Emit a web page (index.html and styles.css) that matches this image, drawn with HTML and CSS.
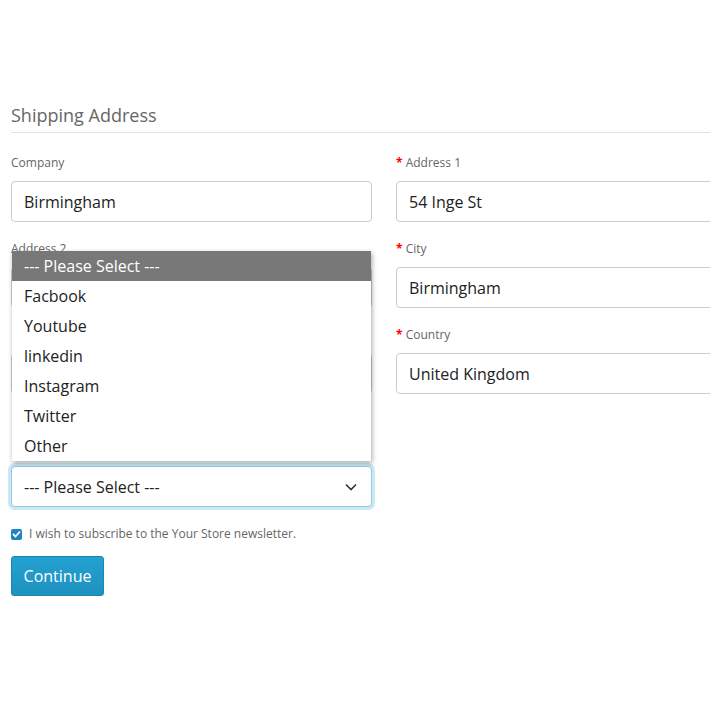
FILE: index.html
```html
<!DOCTYPE html>
<html>
<head>
<meta charset="utf-8">
<link rel="stylesheet" href="styles.css">
</head>
<body>
<div class="page">
  <h2 class="title">Shipping Address</h2>
  <div class="cols">
    <div class="col">
      <div class="field">
        <label class="lbl">Company</label>
        <div class="input">Birmingham</div>
      </div>
      <div class="field">
        <label class="lbl">Address 2</label>
        <div class="input"></div>
      </div>
      <div class="field">
        <span class="lbl"></span>
        <div class="input"></div>
      </div>
      <div class="field field-select">
        <span class="lbl"></span>
        <div class="select">
          <span>--- Please Select ---</span>
          <svg class="chev" width="12" height="8" viewBox="0 0 12 8"><polyline points="1,1.5 6,6.5 11,1.5" fill="none" stroke="#333" stroke-width="1.6"/></svg>
        </div>
      </div>
      <div class="check-row">
        <span class="checkbox"><svg width="9" height="8" viewBox="0 0 9 8"><polyline points="1,4 3.5,6.5 8,1.5" fill="none" stroke="#fff" stroke-width="1.8"/></svg></span>
        <span class="check-text">I wish to subscribe to the Your Store newsletter.</span>
      </div>
      <button class="btn">Continue</button>
      <ul class="dropdown">
        <li class="opt sel">--- Please Select ---</li>
        <li class="opt">Facbook</li>
        <li class="opt">Youtube</li>
        <li class="opt">linkedin</li>
        <li class="opt">Instagram</li>
        <li class="opt">Twitter</li>
        <li class="opt">Other</li>
      </ul>
    </div>
    <div class="col">
      <div class="field">
        <label class="lbl"><span class="req">*</span> Address 1</label>
        <div class="input">54 Inge St</div>
      </div>
      <div class="field">
        <label class="lbl"><span class="req">*</span> City</label>
        <div class="input">Birmingham</div>
      </div>
      <div class="field">
        <label class="lbl"><span class="req">*</span> Country</label>
        <div class="input">United Kingdom</div>
      </div>
    </div>
  </div>
</div>
</body>
</html>
```
FILE: styles.css
```css
html, body {
  margin: 0;
  padding: 0;
  overflow: hidden;
  background: #fff;
}
body {
  font-family: "Open Sans", "Noto Sans", sans-serif;
  color: #333;
}
.page {
  padding: 102px 0 0 11px;
  width: 760px;
}
.title {
  margin: 0;
  font-size: 18px;
  font-weight: 400;
  line-height: 26px;
  color: #666;
  padding-bottom: 4px;
  border-bottom: 1px solid #e2e2e2;
}
.cols {
  display: flex;
  gap: 24px;
  padding-top: 21px;
}
.col {
  width: 361px;
  display: flex;
  flex-direction: column;
  position: relative;
}
.field {
  display: flex;
  flex-direction: column;
  margin-bottom: 18px;
}
.lbl {
  display: block;
  height: 18px;
  font-size: 12px;
  line-height: 18px;
  color: #666;
  margin-bottom: 9px;
}
.req {
  color: #f00;
  font-weight: 700;
}
.input, .select {
  box-sizing: border-box;
  height: 41px;
  border: 1px solid #ccc;
  border-radius: 4px;
  padding: 1px 12px 0;
  font-size: 16px;
  line-height: 38px;
  color: #222;
  background: #fff;
}
.field-select {
  margin-top: 27px;
  margin-bottom: 0;
}
.select {
  display: flex;
  align-items: center;
  justify-content: space-between;
  border-color: #8ecae3;
  box-shadow: 0 0 0 3px rgba(160, 212, 235, 0.55);
  padding-right: 14px;
}
.chev {
  display: block;
}
.check-row {
  display: flex;
  align-items: center;
  gap: 7px;
  margin-top: 19px;
  height: 16px;
}
.checkbox {
  width: 11px;
  height: 11px;
  border-radius: 2px;
  background: #1f84c6;
  display: flex;
  align-items: center;
  justify-content: center;
}
.check-text {
  font-size: 12px;
  color: #666;
  line-height: 16px;
}
.btn {
  margin-top: 14px;
  align-self: flex-start;
  width: 93px;
  height: 40px;
  border: 1px solid #1b86b3;
  border-radius: 3px;
  background: linear-gradient(#23a1d1, #1e91bf);
  color: #fff;
  font-family: "Open Sans", "Noto Sans", sans-serif;
  font-size: 16px;
  padding: 0;
  box-shadow: 0 1px 1px rgba(0,0,0,0.15);
}
.dropdown {
  position: absolute;
  left: 1px;
  top: 97px;
  width: 359px;
  margin: 0;
  padding: 0;
  list-style: none;
  background: #fff;
  box-shadow: 1px 2px 5px rgba(0,0,0,0.35);
}
.opt {
  height: 30px;
  line-height: 30px;
  padding-left: 12px;
  font-size: 16px;
  color: #222;
}
.opt.sel {
  background: #787878;
  color: #fff;
}
```
